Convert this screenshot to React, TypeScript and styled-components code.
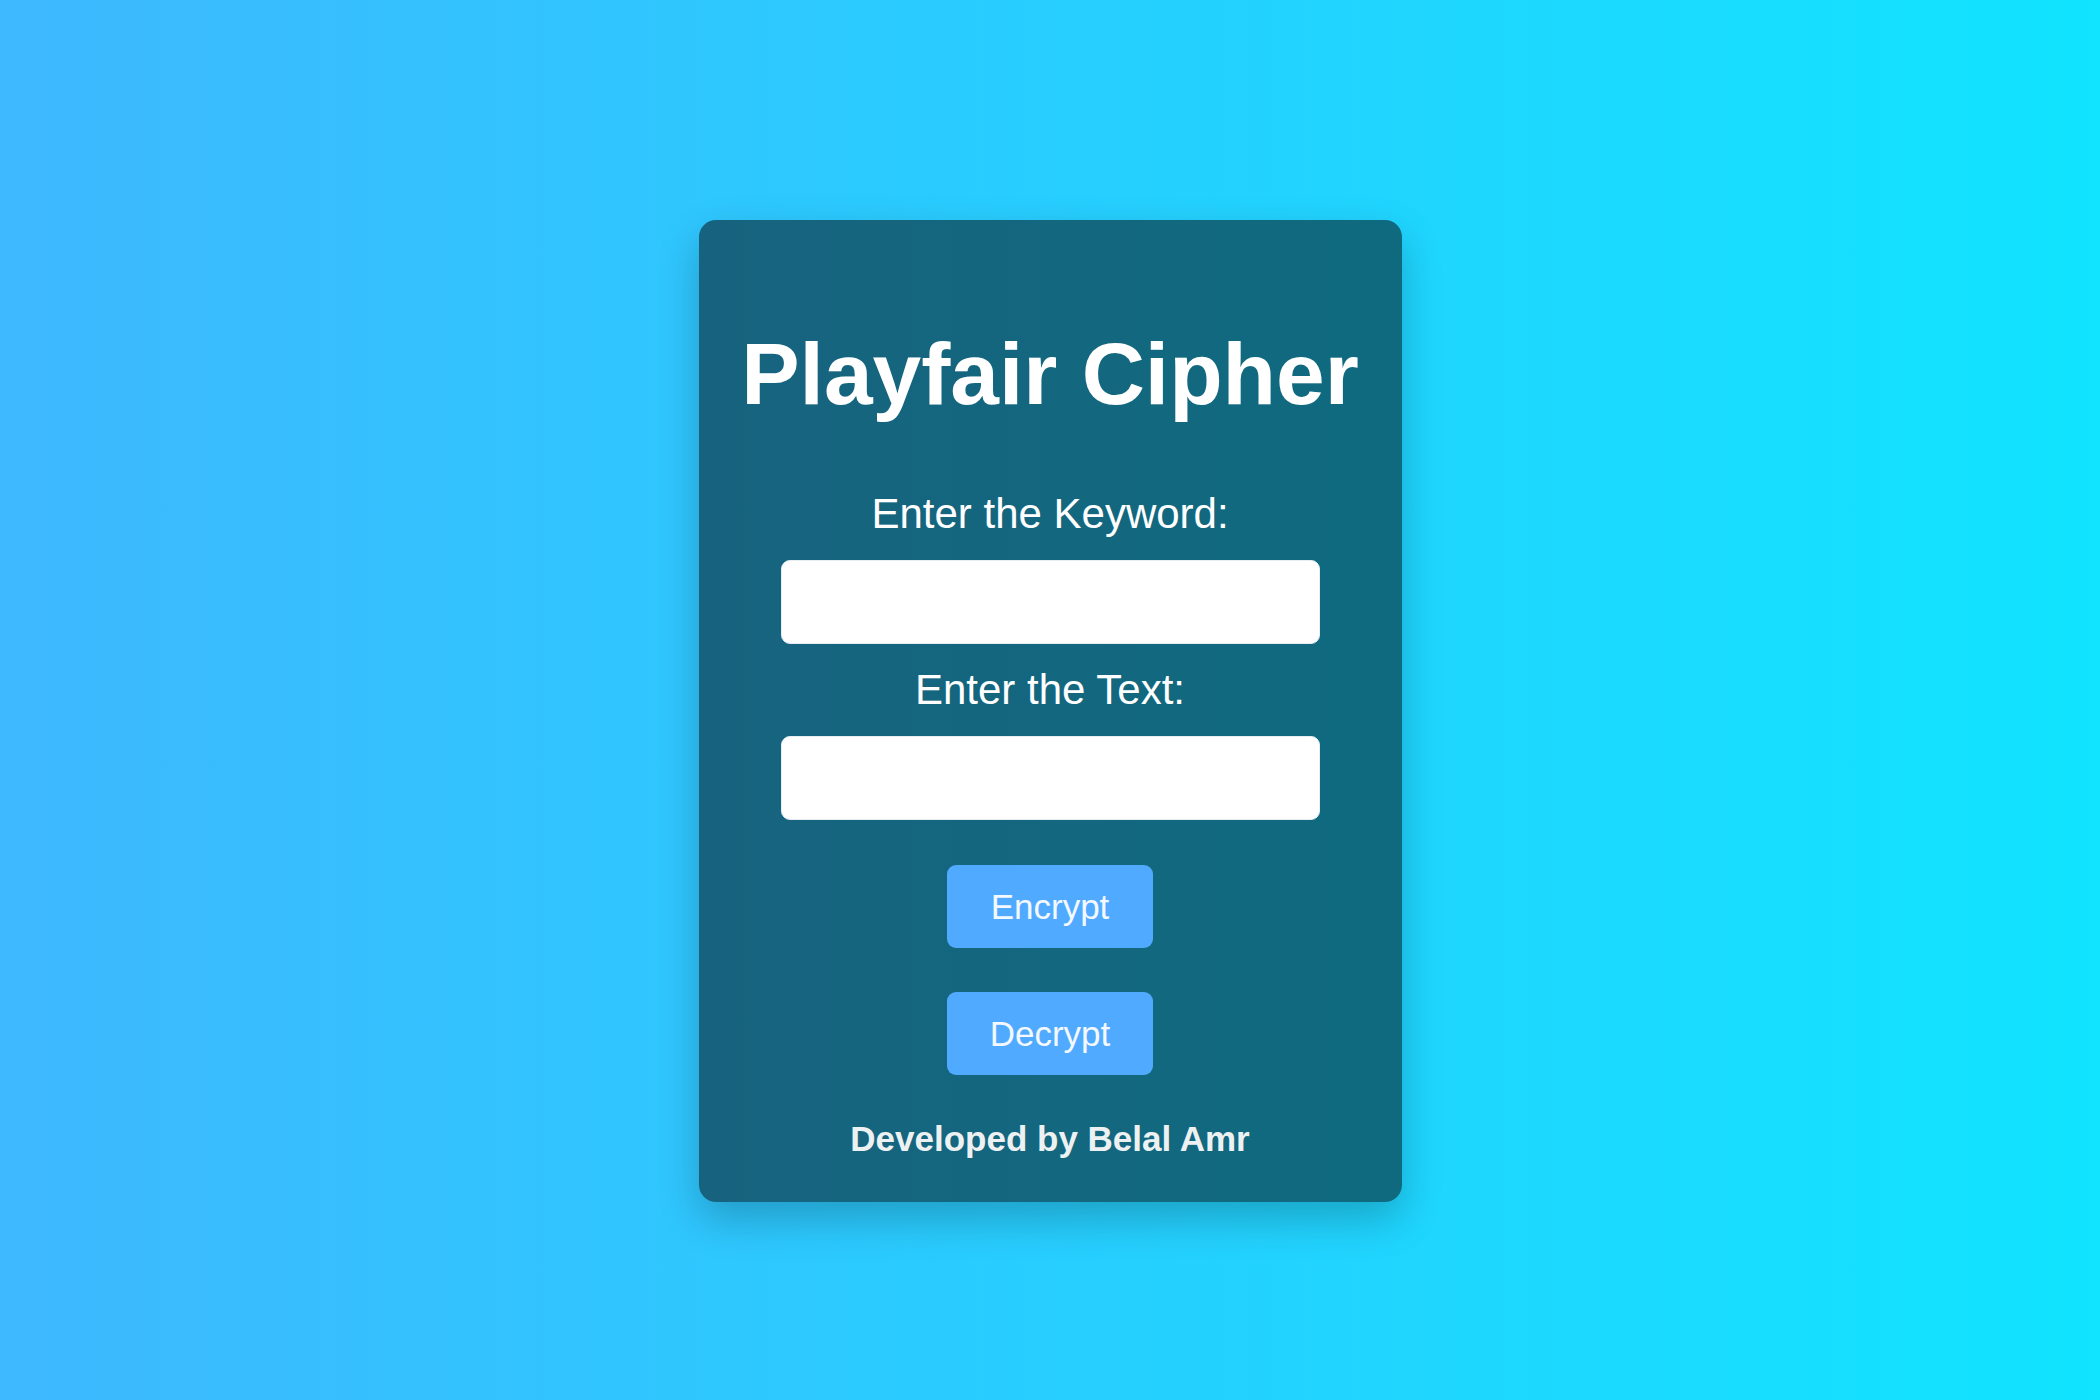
import React from "react";
import styled, { createGlobalStyle } from "styled-components";

const GlobalStyle = createGlobalStyle`
  html, body {
    margin: 0;
    padding: 0;
  }
  body {
    font-family: "Liberation Sans", Arial, sans-serif;
    background: linear-gradient(to right, #3eb8fe, #10e4ff);
    min-height: 100vh;
  }
`;

const Page = styled.main`
  box-sizing: border-box;
  min-height: 100vh;
  padding-top: 22px;
  display: flex;
  align-items: center;
  justify-content: center;
`;

const Card = styled.section`
  box-sizing: border-box;
  width: 703px;
  padding: 104px 82px 43px;
  background: rgba(0, 0, 0, 0.5);
  border-radius: 17px;
  box-shadow: 0 17px 40px rgba(0, 0, 0, 0.22);
  display: flex;
  flex-direction: column;
  align-items: stretch;
  text-align: center;
`;

const Title = styled.h1`
  margin: 0 -82px 65px;
  font-size: 87.5px;
  font-weight: 700;
  line-height: 101px;
  color: #ffffff;
  white-space: nowrap;
  text-align: center;
`;

const Label = styled.label`
  display: block;
  margin: 0 0 22px;
  font-size: 42px;
  line-height: 48px;
  color: #ffffff;
`;

const Input = styled.input<{ $last?: boolean }>`
  box-sizing: border-box;
  width: 100%;
  height: 84px;
  margin: 0 0 ${(p) => (p.$last ? "45px" : "22px")};
  border: 1px solid #e6eef2;
  border-radius: 9px;
  background: #ffffff;
  font-family: "Liberation Sans", Arial, sans-serif;
  font-size: 28px;
  padding: 0 18px;
  outline: none;
`;

const Button = styled.button<{ $gap: number }>`
  align-self: center;
  box-sizing: border-box;
  width: 206px;
  height: 83px;
  margin: 0 0 ${(p) => p.$gap}px;
  border: none;
  border-radius: 9px;
  background: #50aaff;
  color: #f4f8ff;
  font-family: "Liberation Sans", Arial, sans-serif;
  font-size: 35px;
  line-height: 40px;
  cursor: pointer;
`;

const Footer = styled.p`
  margin: 0;
  font-size: 35px;
  font-weight: 700;
  line-height: 40px;
  color: #eef1f2;
`;

export default function App() {
  return (
    <>
      <GlobalStyle />
      <Page>
        <Card>
          <Title>Playfair Cipher</Title>
          <Label htmlFor="keyword">Enter the Keyword:</Label>
          <Input id="keyword" type="text" />
          <Label htmlFor="text">Enter the Text:</Label>
          <Input id="text" type="text" $last />
          <Button $gap={44}>Encrypt</Button>
          <Button $gap={44}>Decrypt</Button>
          <Footer>Developed by Belal Amr</Footer>
        </Card>
      </Page>
    </>
  );
}
